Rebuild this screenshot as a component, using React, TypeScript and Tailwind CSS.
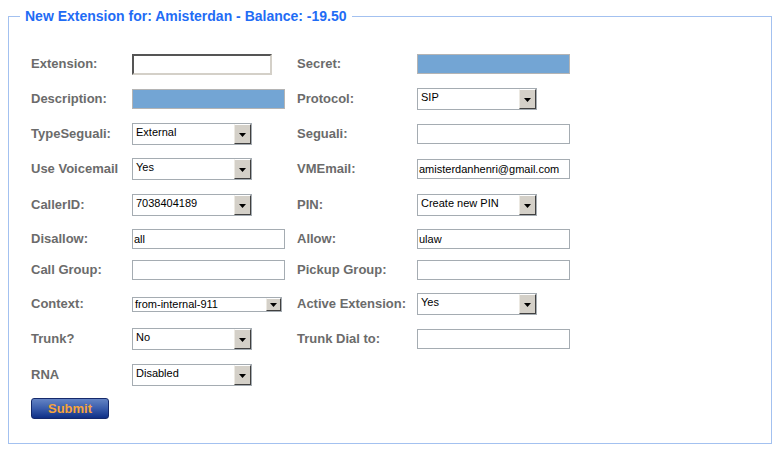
import React from 'react';

type Control =
  | { kind: 'inset' }
  | { kind: 'blue' }
  | { kind: 'input'; value?: string }
  | { kind: 'select'; value: string }
  | { kind: 'mini'; value: string };

type Row = {
  left: [string, Control];
  right?: [string, Control];
  gap: string;
};

const rows: Row[] = [
  { left: ['Extension:', { kind: 'inset' }], right: ['Secret:', { kind: 'blue' }], gap: 'mt-0' },
  { left: ['Description:', { kind: 'blue' }], right: ['Protocol:', { kind: 'select', value: 'SIP' }], gap: 'mt-[13px]' },
  { left: ['TypeSeguali:', { kind: 'select', value: 'External' }], right: ['Seguali:', { kind: 'input' }], gap: 'mt-[13px]' },
  { left: ['Use Voicemail', { kind: 'select', value: 'Yes' }], right: ['VMEmail:', { kind: 'input', value: 'amisterdanhenri@gmail.com' }], gap: 'mt-[13px]' },
  { left: ['CallerID:', { kind: 'select', value: '7038404189' }], right: ['PIN:', { kind: 'select', value: 'Create new PIN' }], gap: 'mt-[14px]' },
  { left: ['Disallow:', { kind: 'input', value: 'all' }], right: ['Allow:', { kind: 'input', value: 'ulaw' }], gap: 'mt-[12px]' },
  { left: ['Call Group:', { kind: 'input' }], right: ['Pickup Group:', { kind: 'input' }], gap: 'mt-[9px]' },
  { left: ['Context:', { kind: 'mini', value: 'from-internal-911' }], right: ['Active Extension:', { kind: 'select', value: 'Yes' }], gap: 'mt-[12px]' },
  { left: ['Trunk?', { kind: 'select', value: 'No' }], right: ['Trunk Dial to:', { kind: 'input' }], gap: 'mt-[13px]' },
  { left: ['RNA', { kind: 'select', value: 'Disabled' }], gap: 'mt-[14px]' },
];

function Arrow({ small }: { small?: boolean }) {
  return (
    <div
      className={`flex items-center justify-center bg-[#d4d0c8] border border-t-white border-l-[#ece9e2] border-r-[#404040] border-b-[#404040] ${
        small ? 'w-[15px] h-full' : 'w-[17px] h-full'
      }`}
    >
      <svg width="7" height="4" viewBox="0 0 7 4" className="mt-[2px]">
        <polygon points="0,0 7,0 3.5,4" fill="#000" />
      </svg>
    </div>
  );
}

function Field({ c }: { c: Control }) {
  switch (c.kind) {
    case 'inset':
      return (
        <div className="w-[140px] h-[21px] bg-white border-2 border-t-[#555] border-l-[#555] border-r-[#d4d0c8] border-b-[#d4d0c8]" />
      );
    case 'blue':
      return <div className="w-[153px] h-[20px] bg-[#73a5d4] border border-[#b4b4b4]" />;
    case 'input':
      return (
        <div className="w-[153px] h-[20px] bg-white border border-[#a5acb2] flex items-center pl-[1px] text-[11px] text-black">
          {c.value}
        </div>
      );
    case 'select':
      return (
        <div className="w-[120px] h-[22px] bg-white border border-[#a5acb2] flex">
          <span className="flex-1 pl-[3px] pt-[1px] text-[11px] leading-[14px] text-black">{c.value}</span>
          <Arrow />
        </div>
      );
    case 'mini':
      return (
        <div className="w-[150px] h-[15px] bg-white border border-[#a5acb2] flex">
          <span className="flex-1 pl-[2px] text-[11px] leading-[13px] text-black">{c.value}</span>
          <Arrow small />
        </div>
      );
  }
}

export default function App() {
  return (
    <div className="w-[781px] h-[452px] bg-white font-['Liberation_Sans',Arial,sans-serif] pt-[8px] px-[8px]">
      <fieldset className="border border-[#a3c1f0] w-[764px] h-[436px]">
        <legend className="ml-[11px] px-[5px] text-[14px] leading-[16px] font-bold text-[#1f6cf5]">
          New Extension for: Amisterdan - Balance: -19.50
        </legend>

        <div className="pt-[29px] pl-[22px]">
          {rows.map((row) => (
            <div key={row.left[0]} className={`flex items-center h-[22px] ${row.gap}`}>
              <div className="w-[101px] text-[13px] font-bold text-[#6b6b6b]">{row.left[0]}</div>
              <div className="w-[165px]">
                <Field c={row.left[1]} />
              </div>
              {row.right && (
                <>
                  <div className="w-[120px] text-[13px] font-bold text-[#6b6b6b]">{row.right[0]}</div>
                  <Field c={row.right[1]} />
                </>
              )}
            </div>
          ))}

          <button className="mt-[12px] w-[78px] h-[21px] rounded-[3px] border border-[#15296b] bg-gradient-to-b from-[#6584c4] via-[#3a5cab] to-[#0f2f86] text-[13px] leading-[17px] font-bold text-[#f7a43a]">
            Submit
          </button>
        </div>
      </fieldset>
    </div>
  );
}
